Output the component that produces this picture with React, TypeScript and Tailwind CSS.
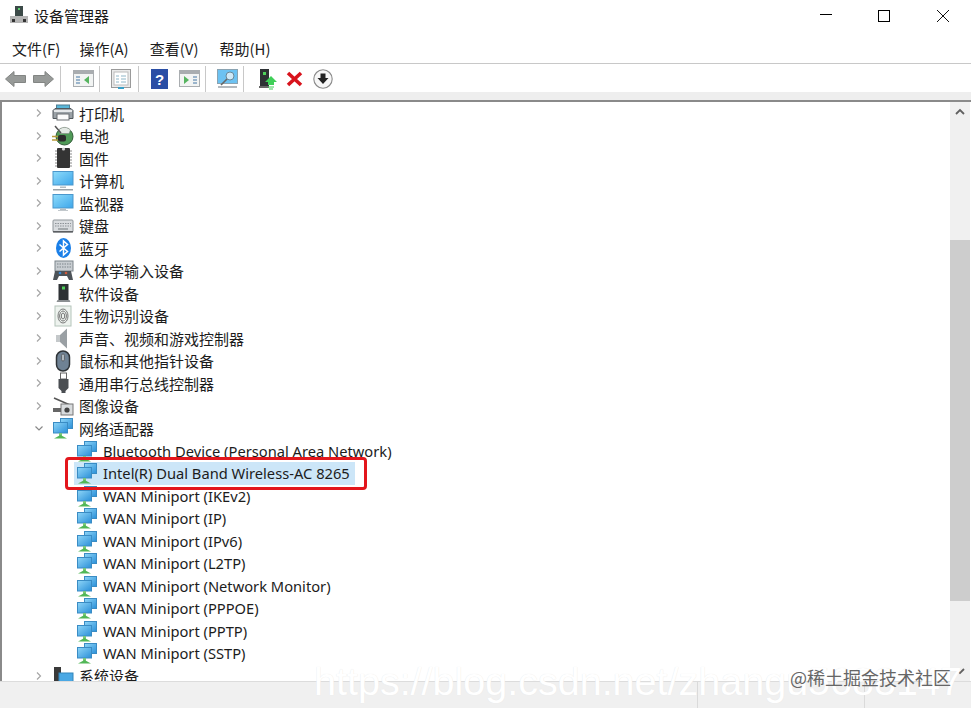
import React from "react";

const FONT = '"Noto Sans CJK SC", "Noto Sans", sans-serif';

function Chevron({ open }: { open?: boolean }) {
  return (
    <svg width="10" height="10" viewBox="0 0 10 10" className="shrink-0">
      {open ? (
        <path d="M1.500 3.500 5 7 8.500 3.500" fill="none" stroke="#888" strokeWidth="1.2" />
      ) : (
        <path d="M3 1.500 6.500 5 3 8.500" fill="none" stroke="#a6a6a6" strokeWidth="1.2" />
      )}
    </svg>
  );
}

function Net() {
  return (
    <svg width="22" height="22" viewBox="0 0 22 22">
      <defs>
        <linearGradient id="netg" x1="0" y1="0" x2="1" y2="1">
          <stop offset="0" stopColor="#8fd6f8" />
          <stop offset="1" stopColor="#2a8fd8" />
        </linearGradient>
      </defs>
      <rect x="8.500" y="1.500" width="12" height="10" fill="url(#netg)" stroke="#3a8cc4" />
      <rect x="1.500" y="5.500" width="14" height="10.500" fill="url(#netg)" stroke="#3a8cc4" />
      <rect x="7" y="16" width="3" height="3" fill="#7ac77a" />
      <path d="M2 21.500 8.500 18 15 21.500Z" fill="#52b757" />
    </svg>
  );
}

function Monitor({ stand }: { stand?: boolean }) {
  return (
    <svg width="22" height="22" viewBox="0 0 22 22">
      <defs>
        <linearGradient id="mong" x1="0" y1="0" x2="1" y2="1">
          <stop offset="0" stopColor="#8fdcfb" />
          <stop offset="1" stopColor="#3da6ea" />
        </linearGradient>
      </defs>
      <rect x="1" y={stand ? 1.500 : 2.500} width="20" height="13.500" fill="url(#mong)" stroke="#4b97cc" />
      <path d="M8 16.500h6v1.500H8z" fill="#b5bcc1" />
      {stand ? <rect x="1" y="19" width="20" height="1.500" fill="#9aa2a8" /> : <rect x="6" y="18" width="10" height="1" fill="#c2c8cc" />}
    </svg>
  );
}

const icons: Record<string, React.ReactNode> = {
  printer: (
    <svg width="22" height="22" viewBox="0 0 22 22">
      <rect x="4.500" y="3" width="13" height="4" fill="#58b6d8" stroke="#4f7d92" />
      <path d="M1 8.500l2-2h16l2 2v8H1z" fill="#9aa1a6" stroke="#50575c" />
      <rect x="2" y="8" width="18" height="2" fill="#e6e8ea" />
      <rect x="5" y="12" width="12" height="6" fill="#fbfbfb" stroke="#6a6f73" />
    </svg>
  ),
  battery: (
    <svg width="22" height="22" viewBox="0 0 22 22">
      <circle cx="12.500" cy="11.500" r="8.500" fill="#4f9a57" stroke="#2f5a35" />
      <path d="M6.500 5c3-3.500 9-3.500 12 0l-1.500 3.500H8z" fill="#e3e9e4" stroke="#7f8a82" strokeWidth=".6" />
      <rect x="6" y="10" width="8" height="6.500" rx="2" fill="#2b2b2b" />
      <path d="M0 11.500h6M0 15h6" stroke="#b89a3a" strokeWidth="1.700" />
      <path d="M3 1l6 7" stroke="#555" strokeWidth="1.500" />
    </svg>
  ),
  firmware: (
    <svg width="22" height="22" viewBox="0 0 22 22">
      <rect x="5" y="1" width="13" height="20" rx="1" fill="#343434" />
      <path d="M3 4h2M3 7h2M3 10h2M3 13h2M3 16h2M3 19h2M18 4h2M18 7h2M18 10h2M18 13h2M18 16h2M18 19h2" stroke="#8a8a8a" />
      <circle cx="11.500" cy="2" r="1.600" fill="#cfcfcf" />
    </svg>
  ),
  computer: <Monitor stand />,
  monitor: <Monitor />,
  keyboard: (
    <svg width="22" height="22" viewBox="0 0 22 22">
      <rect x="1" y="5" width="20" height="12" rx="1" fill="#d9dcdf" stroke="#8f959a" />
      <path d="M3 8.500h16M3 11h16" stroke="#8d9297" strokeDasharray="1.500 1" />
      <path d="M6 14h10" stroke="#8d9297" strokeWidth="1.400" />
      <rect x="1" y="16" width="20" height="1.500" fill="#5c5f62" />
    </svg>
  ),
  bluetooth: (
    <svg width="22" height="22" viewBox="0 0 22 22">
      <ellipse cx="11.500" cy="11" rx="7.500" ry="10" fill="#1a7fe8" />
      <path d="M7.500 7.500l8 7-4 3.500V4l4 3.500-8 7" fill="none" stroke="#fff" strokeWidth="1.500" />
    </svg>
  ),
  hid: (
    <svg width="22" height="22" viewBox="0 0 22 22">
      <rect x="3" y="1" width="18" height="10" fill="#c9ced2" stroke="#7d858b" />
      <path d="M5 4h14M5 7h14" stroke="#7d858b" strokeDasharray="1.500 1" />
      <path d="M1 20l2-9h16l2 9h-4l-2-4H7l-2 4z" fill="#4d5358" />
      <circle cx="8" cy="13" r="1.300" fill="#3b87d0" />
      <circle cx="14" cy="13" r="1.300" fill="#d05a3b" />
    </svg>
  ),
  software: (
    <svg width="22" height="22" viewBox="0 0 22 22">
      <rect x="6.500" y="2" width="10" height="16" fill="#2d3134" />
      <rect x="10" y="4.500" width="3" height="3" fill="#4fd05a" />
      <path d="M5.500 18h12l1 2h-14z" fill="#8b8f92" />
    </svg>
  ),
  biometric: (
    <svg width="22" height="22" viewBox="0 0 22 22">
      <rect x="3" y="1" width="16" height="20" fill="#eef3ef" stroke="#b4c4ba" />
      <ellipse cx="11" cy="11" rx="5" ry="7" fill="none" stroke="#777" />
      <ellipse cx="11" cy="11" rx="3.400" ry="5" fill="none" stroke="#777" />
      <ellipse cx="11" cy="11" rx="1.700" ry="3" fill="none" stroke="#777" />
    </svg>
  ),
  speaker: (
    <svg width="22" height="22" viewBox="0 0 22 22">
      <path d="M4 8h4v7H4z" fill="#c4c8ca" />
      <path d="M8 8l7-6.500v20L8 15z" fill="#9aa0a4" />
    </svg>
  ),
  mouse: (
    <svg width="22" height="22" viewBox="0 0 22 22">
      <rect x="4.500" y="1" width="13" height="20" rx="6.500" fill="#6f8294" stroke="#2f3438" strokeWidth="1.500" />
      <rect x="9.500" y="4" width="3" height="7" rx="1.500" fill="#aeb8c0" stroke="#444" strokeWidth=".6" />
    </svg>
  ),
  usb: (
    <svg width="22" height="22" viewBox="0 0 22 22">
      <rect x="8.500" y="1" width="6" height="6" fill="#fff" stroke="#666" />
      <path d="M6.500 7h10v9l-3 3v2h-4v-2l-3-3z" fill="#4a4e52" />
    </svg>
  ),
  camera: (
    <svg width="22" height="22" viewBox="0 0 22 22">
      <path d="M2 3l16 7" stroke="#555" strokeWidth="1.500" />
      <rect x="9" y="9" width="12" height="11" fill="#d9dcde" stroke="#777" />
      <circle cx="15" cy="15" r="2.600" fill="#444" />
      <rect x="1" y="13" width="8" height="4" fill="#666" />
    </svg>
  ),
  net: <Net />,
  system: (
    <svg width="22" height="22" viewBox="0 0 22 22">
      <rect x="2" y="2" width="7" height="18" fill="#3a3a3a" />
      <rect x="7" y="8" width="14" height="12" fill="#4aa8e4" stroke="#3286bb" />
    </svg>
  ),
};

const cats: [string, string][] = [
  ["printer", "打印机"],
  ["battery", "电池"],
  ["firmware", "固件"],
  ["computer", "计算机"],
  ["monitor", "监视器"],
  ["keyboard", "键盘"],
  ["bluetooth", "蓝牙"],
  ["hid", "人体学输入设备"],
  ["software", "软件设备"],
  ["biometric", "生物识别设备"],
  ["speaker", "声音、视频和游戏控制器"],
  ["mouse", "鼠标和其他指针设备"],
  ["usb", "通用串行总线控制器"],
  ["camera", "图像设备"],
];

const adapters = [
  "Bluetooth Device (Personal Area Network)",
  "Intel(R) Dual Band Wireless-AC 8265",
  "WAN Miniport (IKEv2)",
  "WAN Miniport (IP)",
  "WAN Miniport (IPv6)",
  "WAN Miniport (L2TP)",
  "WAN Miniport (Network Monitor)",
  "WAN Miniport (PPPOE)",
  "WAN Miniport (PPTP)",
  "WAN Miniport (SSTP)",
];

function Cat({ icon, label, open }: { icon: string; label: string; open?: boolean }) {
  return (
    <div className="flex h-[22.5px] shrink-0 items-center">
      <div className="flex w-[50px] shrink-0 justify-end pr-[8px]">
        <Chevron open={open} />
      </div>
      <div className="h-[22px] w-[22px] shrink-0">{icons[icon]}</div>
      <span className="ml-[5px] text-[15px] leading-none text-[#1c1c1c]">{label}</span>
    </div>
  );
}

function Sep({ ml }: { ml: string }) {
  return <div className={"h-[26px] w-px shrink-0 bg-[#c8c8c8] " + ml} />;
}

function Win({ right, className }: { right?: boolean; className?: string }) {
  return (
    <svg width="21" height="18" viewBox="0 0 21 18" className={className}>
      <rect x=".5" y=".5" width="20" height="16" fill="#f2f4f3" stroke="#a9adb0" />
      <rect x="1" y="1" width="19" height="3" fill="#a9adb0" />
      <path d="M3 7h4M3 10h4M3 13h4" stroke="#7fa0c0" strokeWidth="1.400" transform={right ? "translate(11 0)" : undefined} />
      <path d={right ? "M5 6l5 4-5 4z" : "M16 6l-5 4 5 4z"} fill="#56b45f" />
    </svg>
  );
}

function Toolbar() {
  return (
    <div className="flex h-[28px] shrink-0 items-center bg-white pl-[5px] pt-[2px]">
      <svg width="21" height="16" viewBox="0 0 21 16">
        <path d="M.5 8 9 .5V4.500h11.500v7H9v4z" fill="#979a98" stroke="#828583" />
      </svg>
      <svg width="21" height="16" viewBox="0 0 21 16" className="ml-[7px]">
        <path d="M20.500 8 12 .5V4.500H.5v7H12v4z" fill="#979a98" stroke="#828583" />
      </svg>
      <Sep ml="ml-[6px]" />
      <Win className="ml-[12px]" />
      <Sep ml="ml-[5px]" />
      <svg width="20" height="21" viewBox="0 0 20 21" className="ml-[11px]">
        <rect x=".5" y=".5" width="19" height="18" fill="#eaeaea" stroke="#9a9a9a" />
        <rect x="3" y="3" width="14" height="13" fill="#fff" stroke="#bbb" />
        <path d="M5 7h3M10 7h5M5 10h3M10 10h5M5 13h3M10 13h5" stroke="#8fb6c8" />
        <path d="M7 19h6" stroke="#38a0c8" strokeWidth="2" />
      </svg>
      <Sep ml="ml-[7px]" />
      <div
        className="ml-[12px] flex h-[20px] w-[17px] items-center justify-center bg-[#2a4ea5] text-[15px] font-bold leading-none text-white"
        style={{ fontFamily: '"Liberation Sans", sans-serif' }}
      >
        ?
      </div>
      <Win right className="ml-[11px]" />
      <Sep ml="ml-[5px]" />
      <svg width="21" height="21" viewBox="0 0 21 21" className="ml-[11px]">
        <rect x=".5" y=".5" width="20" height="14" fill="#6cc2f2" stroke="#8aa3b2" />
        <circle cx="13" cy="7" r="4" fill="#cfe9f7" stroke="#6a8899" />
        <path d="M10 10l-6 6" stroke="#666" strokeWidth="1.600" />
        <path d="M1 18h19" stroke="#9aa2a8" strokeWidth="1.500" />
      </svg>
      <Sep ml="ml-[5px]" />
      <svg width="18" height="21" viewBox="0 0 18 21" className="ml-[15px]">
        <rect x="1" y="0" width="9" height="17" fill="#2d3134" />
        <rect x="4" y="3" width="3" height="3" fill="#4fd05a" />
        <path d="M0 17h10v2H0z" fill="#666" />
        <path d="M12 7l6 6h-3v3H9v-3H6z" fill="#3fcf58" />
        <path d="M9 18h6M10 20h4" stroke="#3fcf58" />
      </svg>
      <svg width="17" height="16" viewBox="0 0 17 16" className="ml-[9px]">
        <path d="M2 2l13 12M15 2 2 14" stroke="#d8131c" strokeWidth="3.600" />
      </svg>
      <svg width="20" height="20" viewBox="0 0 20 20" className="ml-[10px]">
        <circle cx="10" cy="10" r="9.200" fill="#f7f7f7" stroke="#8a8a8a" strokeWidth="1.100" />
        <path d="M7.500 4.500h5V9h3L10 15 4.500 9h3z" fill="#222" />
      </svg>
    </div>
  );
}

export default function App() {
  return (
    <div className="relative flex h-[708px] w-[971px] flex-col overflow-hidden bg-white" style={{ fontFamily: FONT }}>
      <div className="flex h-[30px] shrink-0 items-center">
        <svg width="18" height="18" viewBox="0 0 18 18" className="ml-[10px]">
          <rect x="5" y="0" width="8" height="10" fill="#3c4a48" />
          <rect x="8" y="2" width="2" height="2" fill="#5fd070" />
          <rect x="0" y="10" width="18" height="7" fill="#b5b5b5" />
          <rect x="2" y="13" width="3" height="3" fill="#333" />
          <rect x="13" y="13" width="3" height="3" fill="#333" />
        </svg>
        <span className="ml-[6px] text-[15px] leading-none text-[#1a1a1a]">设备管理器</span>
        <div className="ml-auto mt-[1px] flex items-center">
          <div className="mb-[2px] mr-[46px] h-px w-[12px] bg-black" />
          <div className="mr-[46px] h-[12px] w-[12px] border border-black" />
          <svg width="14" height="14" viewBox="0 0 14 14" className="mr-[21px]">
            <path d="M1 1l12 12M13 1 1 13" stroke="#111" />
          </svg>
        </div>
      </div>

      <div className="flex h-[33px] shrink-0 items-center pl-[12px] pt-[3px] text-[15px] leading-none text-[#1c1c1c]">
        <span>文件(F)</span>
        <span className="ml-[19px]">操作(A)</span>
        <span className="ml-[21px]">查看(V)</span>
        <span className="ml-[21px]">帮助(H)</span>
      </div>
      <div className="h-[1px] shrink-0 bg-[#c8c8c8]" />

      <Toolbar />

      <div className="h-[8px] shrink-0 bg-[#eeeeee]" />
      <div className="h-[2px] shrink-0 bg-[#8a8a8a]" />

      <div className="flex min-h-0 flex-1 border-l-2 border-[#8a8a8a]">
        <div className="relative flex min-w-0 flex-1 flex-col overflow-hidden">
          {cats.map(([i, l]) => (
            <Cat key={l} icon={i} label={l} />
          ))}
          <Cat icon="net" label="网络适配器" open />
          {adapters.map((a, idx) => (
            <div key={a} className="flex h-[22.5px] shrink-0 items-center pl-[72px]">
              <div className={"flex h-[22.5px] items-center pl-[2px] pr-[5px] " + (idx === 1 ? "bg-[#cce6f8]" : "")}>
                <div className="h-[22px] w-[22px] shrink-0"><Net /></div>
                <span
                  className="ml-[5px] text-[14.7px] leading-[22px] text-[#1c1c1c]"
                  style={{ fontFamily: '"Noto Sans", sans-serif' }}
                >
                  {a}
                </span>
              </div>
            </div>
          ))}
          <Cat icon="system" label="系统设备" />
          <div className="absolute left-[63px] top-[355px] h-[33px] w-[302px] rounded-[4px] border-[3px] border-[#e3161c]" />
        </div>
        <div className="relative flex w-[20px] shrink-0 flex-col bg-[#f0f0f0]">
          <div className="flex h-[20px] shrink-0 items-center justify-center">
            <svg width="10" height="8" viewBox="0 0 10 8"><path d="M1 6 5 2l4 4" fill="none" stroke="#606060" strokeWidth="1.800" /></svg>
          </div>
          <div className="mt-[118px] h-[361px] shrink-0 bg-[#cdcdcd]" />
          <div className="mt-auto flex h-[20px] shrink-0 items-center justify-center">
            <svg width="10" height="8" viewBox="0 0 10 8"><path d="M1 2 5 6l4-4" fill="none" stroke="#606060" strokeWidth="1.800" /></svg>
          </div>
        </div>
        <div className="w-px shrink-0 bg-white" />
      </div>

      <div className="flex h-[27px] shrink-0 border-t border-[#dcdcdc] bg-[#f0f0f0]">
        <div className="w-[697px]" />
        <div className="w-[167px] border-l border-[#dadada]" />
        <div className="flex-1 border-l border-[#dadada]" />
      </div>

      <div
        className="absolute left-[314px] top-[662px] whitespace-nowrap text-[39.5px] leading-none text-white [text-shadow:0_0_1px_#e4e4e4]"
        style={{ fontFamily: '"Liberation Sans", sans-serif' }}
      >
        https://blog.csdn.net/zhangu5688147
      </div>
      <div className="absolute left-[790px] top-[666px] whitespace-nowrap text-[18px] leading-[22px] text-[#666666]">
        @稀土掘金技术社区
      </div>
    </div>
  );
}
